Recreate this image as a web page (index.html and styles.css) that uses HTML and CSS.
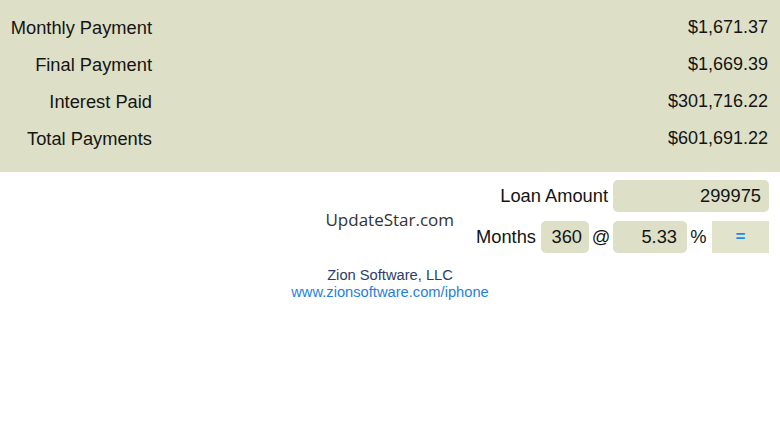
FILE: index.html
```html
<!DOCTYPE html>
<html lang="en">
<head>
    <meta charset="UTF-8">
    <meta name="viewport" content="width=device-width, initial-scale=1.0">
    <title>Loan Calculator</title>
    <link rel="stylesheet" href="styles.css">
</head>
<body>
    <section class="results">
        <div class="label">Monthly Payment</div>
        <div class="value">$1,671.37</div>
        <div class="label">Final Payment</div>
        <div class="value">$1,669.39</div>
        <div class="label">Interest Paid</div>
        <div class="value">$301,716.22</div>
        <div class="label">Total Payments</div>
        <div class="value">$601,691.22</div>
    </section>

    <section class="calc">
        <div class="brand">UpdateStar.com</div>
        <div class="form">
            <div class="form-row">
                <span class="field-label">Loan Amount</span>
                <div class="box box-loan">299975</div>
            </div>
            <div class="form-row">
                <span class="field-label">Months</span>
                <div class="box box-months">360</div>
                <span class="sym sym-at">@</span>
                <div class="box box-rate">5.33</div>
                <span class="sym sym-pct">%</span>
                <div class="equals">=</div>
            </div>
        </div>
    </section>

    <footer class="credits">
        <div class="company">Zion Software, LLC</div>
        <div class="url">www.zionsoftware.com/iphone</div>
    </footer>
</body>
</html>
```

FILE: styles.css
```css
body {
    margin: 0;
    padding: 0;
    background: #fff;
    font-family: "Liberation Sans", Arial, sans-serif;
    color: #141414;
    width: 780px;
    height: 439px;
    overflow: hidden;
}

.results {
    background-color: #dde0c6;
    height: 172px;
    box-sizing: border-box;
    padding-top: 9px;
    display: grid;
    grid-template-columns: 152px 1fr;
    grid-auto-rows: 37px;
    font-size: 18.3px;
    line-height: 37px;
}
.results .label {
    text-align: right;
}
.results .value {
    text-align: right;
    padding-right: 12px;
    font-size: 18px;
}

.calc {
    display: grid;
    grid-template-columns: 1fr auto;
    margin-top: 8px;
}
.brand {
    align-self: center;
    text-align: right;
    padding-right: 22px;
    padding-top: 6px;
    font-family: "Open Sans", "Noto Sans", sans-serif;
    font-size: 17px;
    line-height: 24px;
    color: #333;
}
.form {
    display: flex;
    flex-direction: column;
    gap: 9px;
    padding-right: 11px;
}
.form-row {
    display: flex;
    justify-content: flex-end;
    align-items: center;
    height: 32px;
    font-size: 18.3px;
    line-height: 32px;
}
.field-label {
    margin-right: 5px;
}
.box {
    background-color: #dde0c6;
    border-radius: 5px;
    height: 32px;
    box-sizing: border-box;
    text-align: right;
    padding-right: 8px;
}
.box-loan {
    width: 156px;
}
.box-months {
    width: 48px;
    padding-right: 7px;
}
.box-rate {
    width: 74px;
    padding-right: 10px;
}
.sym {
    text-align: center;
}
.sym-at {
    width: 24px;
}
.sym-pct {
    width: 23px;
    margin-right: 2px;
}
.equals {
    width: 57px;
    height: 32px;
    background-color: #e1e4cb;
    color: #1a8cf0;
    text-align: center;
    font-weight: bold;
    font-size: 17px;
}

.credits {
    margin-top: 14px;
    text-align: center;
    font-size: 14.7px;
    line-height: 17px;
}
.company {
    color: #2d3c6c;
}
.url {
    color: #1f7fe3;
}
```
